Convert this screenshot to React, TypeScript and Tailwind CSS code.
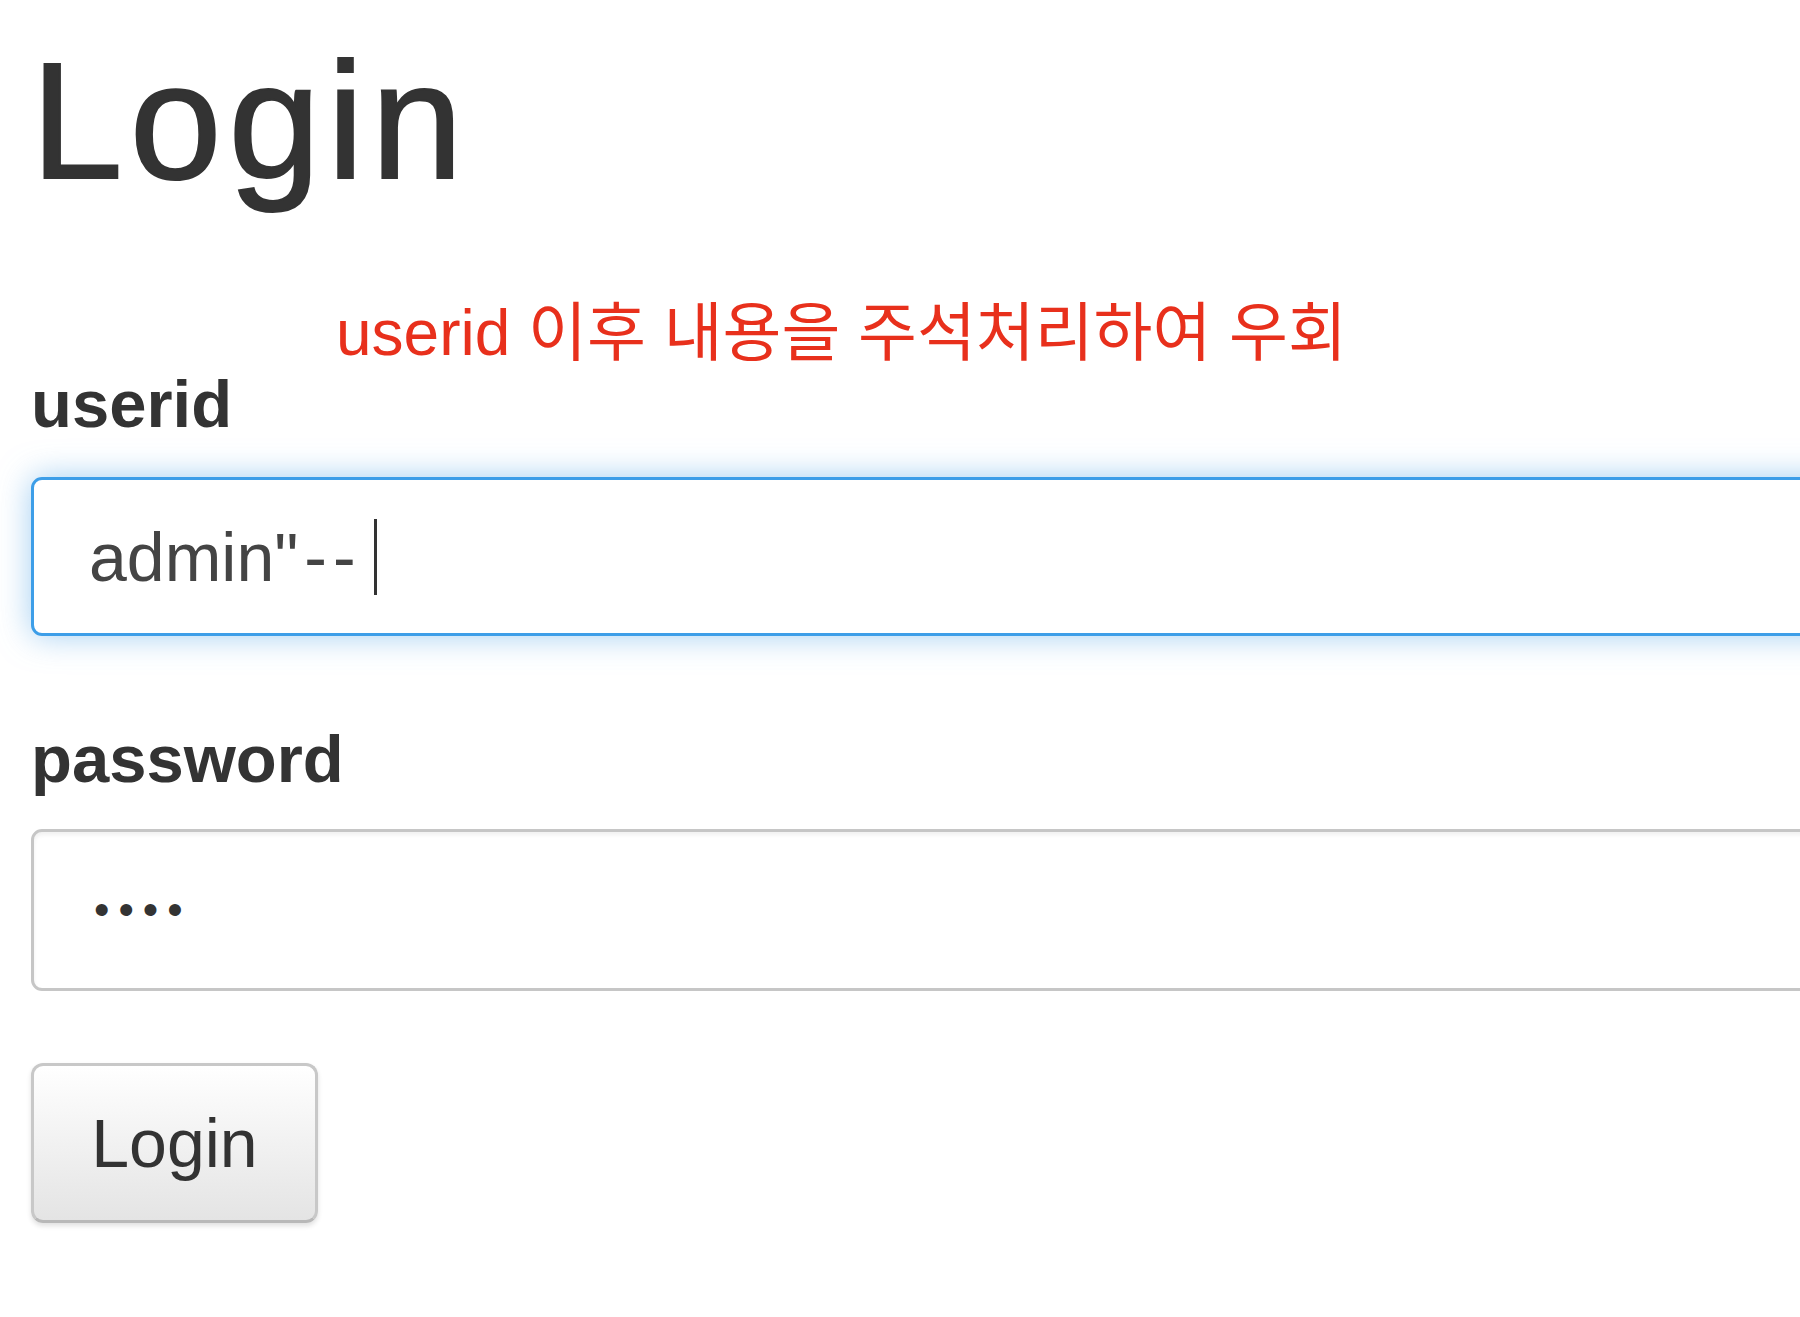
import React from "react";

export default function App() {
  return (
    <div className="relative w-[1800px] h-[1317px] overflow-hidden bg-white pl-[31px] text-[#333]" style={{ fontFamily: '"Liberation Sans", "Noto Sans CJK KR", sans-serif' }}>
      <h1 className="mt-[29px] h-[182px] text-[165px] leading-[184px] font-normal tracking-[7px] text-[#333] [-webkit-text-stroke:2px_#333]">Login</h1>

      <div className="absolute left-[336px] top-[298px] h-[70px] text-[64px] leading-[70px] text-[#e8301c] whitespace-nowrap">
        userid 이후 내용을 주석처리하여 우회
      </div>

      <div className="mt-[146px] h-[93px] text-[67px] leading-[93px] font-bold text-[#333]">userid</div>
      <div className="mt-[27px] flex h-[159px] w-[1900px] items-center rounded-[11px] border-[3px] border-[#3d9ee8] bg-white pl-[55px] text-[68px] text-[#444] shadow-[0_0_32px_rgba(102,175,233,0.6)]">
        <span className="whitespace-pre">admin<span className="tracking-[6px]">"--</span> </span>
        <span className="ml-[-7px] h-[76px] w-[3px] bg-[#333]" />
      </div>

      <div className="mt-[76px] h-[93px] text-[67px] leading-[93px] font-bold text-[#333]">password</div>
      <div className="mt-[24px] flex h-[162px] w-[1900px] items-center rounded-[11px] border-[3px] border-[#c6c6c6] bg-white pl-[60px] shadow-[inset_0_3px_4px_rgba(0,0,0,0.06)]">
        <span className="text-[44px] leading-none tracking-[9px] text-[#333]">••••</span>
      </div>

      <div className="mt-[72px] flex h-[160px] w-[287px] items-center justify-center rounded-[12px] border-[3px] border-[#c8c8c8] border-b-[#b8b8b8] bg-gradient-to-b from-white to-[#e4e4e4] text-[68px] text-[#333] shadow-[0_3px_5px_rgba(0,0,0,0.12)]">
        Login
      </div>
    </div>
  );
}
